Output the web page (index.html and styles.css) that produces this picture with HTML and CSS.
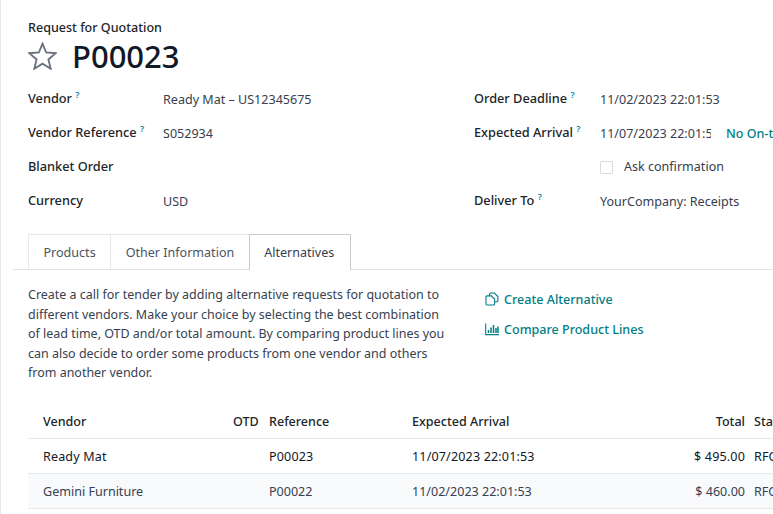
FILE: index.html
```html
<!DOCTYPE html>
<html lang="en">

<head>
    <meta charset="UTF-8">
    <meta name="viewport" content="width=device-width, initial-scale=1.0">
    <title>Request for Quotation P00023</title>
    <link rel="stylesheet" href="styles.css">
</head>

<body>
    <div class="sheet">
        <div class="title-block">
            <div class="doc-type">Request for Quotation</div>
            <div class="doc-name">
                <svg class="star" viewBox="0 0 28 27" width="29" height="28">
                    <path d="M14 1.5 L17.5 10.1 L26.8 10.8 L19.7 16.8 L21.9 25.8 L14 20.9 L6.1 25.8 L8.3 16.8 L1.2 10.8 L10.5 10.1 Z" />
                </svg>
                <h1>P00023</h1>
            </div>
        </div>

        <div class="form-columns">
            <div class="form-col">
                <div class="field">
                    <div class="label">Vendor <sup>?</sup></div>
                    <div class="value">Ready Mat – US12345675</div>
                </div>
                <div class="field">
                    <div class="label">Vendor Reference <sup>?</sup></div>
                    <div class="value">S052934</div>
                </div>
                <div class="field">
                    <div class="label">Blanket Order</div>
                    <div class="value"></div>
                </div>
                <div class="field">
                    <div class="label">Currency</div>
                    <div class="value">USD</div>
                </div>
            </div>
            <div class="form-col right">
                <div class="field">
                    <div class="label">Order Deadline <sup>?</sup></div>
                    <div class="value">11/02/2023 22:01:53</div>
                </div>
                <div class="field">
                    <div class="label">Expected Arrival <sup>?</sup></div>
                    <div class="value arrival">
                        <span class="clipped">11/07/2023 22:01:53</span>
                        <span class="on-time">No On-time Delivery Data</span>
                    </div>
                </div>
                <div class="field">
                    <div class="label"></div>
                    <div class="value confirm"><span class="checkbox"></span>Ask confirmation</div>
                </div>
                <div class="field">
                    <div class="label">Deliver To <sup>?</sup></div>
                    <div class="value">YourCompany: Receipts</div>
                </div>
            </div>
        </div>

        <div class="tabs">
            <div class="tab">Products</div>
            <div class="tab">Other Information</div>
            <div class="tab active">Alternatives</div>
        </div>

        <div class="tab-body">
            <p class="help">Create a call for tender by adding alternative requests for quotation to different vendors. Make your choice by selecting the best combination of lead time, OTD and/or total amount. By comparing product lines you can also decide to order some products from one vendor and others from another vendor.</p>
            <div class="actions">
                <a class="action">
                    <svg viewBox="0 0 14 14" width="14" height="14">
                        <path d="M4.6 3.8 V2 a1 1 0 0 1 1-1 H9.2 L12.9 4.6 V8.8 a1 1 0 0 1-1 1 H9.8" />
                        <path d="M2 3.9 H6.4 L9.6 7 V12 a1 1 0 0 1-1 1 H2 a1 1 0 0 1-1-1 V4.9 a1 1 0 0 1 1-1 Z" />
                    </svg>
                    Create Alternative
                </a>
                <a class="action">
                    <svg viewBox="0 0 14 14" width="14" height="14">
                        <path d="M0.7 1.5 V12.6 H14" />
                        <path class="bars" d="M3.5 8 V11 M6 5.5 V11 M8.5 3 V11 M11 6 V11 M13 4.5 V11" />
                    </svg>
                    Compare Product Lines
                </a>
            </div>
        </div>

        <table class="orders">
            <colgroup>
                <col class="c-vendor">
                <col class="c-otd">
                <col class="c-ref">
                <col class="c-arrival">
                <col class="c-total">
                <col class="c-status">
            </colgroup>
            <thead>
                <tr>
                    <th>Vendor</th>
                    <th class="num otd">OTD</th>
                    <th>Reference</th>
                    <th>Expected Arrival</th>
                    <th class="num">Total</th>
                    <th>Status</th>
                </tr>
            </thead>
            <tbody>
                <tr class="current">
                    <td>Ready Mat</td>
                    <td class="num"></td>
                    <td>P00023</td>
                    <td>11/07/2023 22:01:53</td>
                    <td class="num">$ 495.00</td>
                    <td>RFQ</td>
                </tr>
                <tr class="odd">
                    <td>Gemini Furniture</td>
                    <td class="num"></td>
                    <td>P00022</td>
                    <td>11/02/2023 22:01:53</td>
                    <td class="num">$ 460.00</td>
                    <td>RFQ</td>
                </tr>
            </tbody>
        </table>
    </div>
</body>

</html>
```

FILE: styles.css
```css
/* General Reset */
html,
body {
    margin: 0;
    height: 100%;
    overflow: hidden;
}

body {
    font-family: "Noto Sans", "Open Sans", sans-serif;
    font-size: 12.55px;
    color: #374151;
    background-color: #e7e9ed;
}

.sheet {
    margin-left: 1px;
    width: 772px;
    height: 514px;
    overflow: hidden;
    background-color: #ffffff;
}

/* Title */
.title-block {
    padding: 19px 0 0 27px;
}

.doc-type {
    font-weight: 500;
    line-height: 17px;
    color: #212529;
}

.doc-name {
    display: flex;
    align-items: center;
    gap: 15px;
    height: 36px;
    margin-top: 2px;
}

.star {
    flex: none;
    fill: none;
    stroke: #6b7280;
    stroke-width: 1.8;
}

h1 {
    margin: 0;
    font-size: 31px;
    font-weight: 500;
    line-height: 36px;
    color: #111827;
}

/* Form */
.form-columns {
    display: flex;
    margin-top: 14px;
    padding-left: 27px;
}

.form-col {
    flex: none;
    width: 446px;
}

.form-col.right {
    width: 299px;
    overflow: hidden;
}

.field {
    display: flex;
    height: 34px;
}

.label {
    flex: none;
    width: 135px;
    padding-top: 2px;
    font-size: 12.75px;
    font-weight: 500;
    line-height: 17px;
    color: #212529;
    white-space: nowrap;
}

.right .label {
    width: 126px;
}

.value {
    padding-top: 3px;
    line-height: 17px;
    white-space: nowrap;
}

sup {
    font-size: 9px;
    font-weight: 600;
    line-height: 0;
    color: #0180a5;
}

.arrival {
    display: flex;
}

.clipped {
    display: block;
    flex: none;
    width: 111px;
    overflow: hidden;
}

.on-time {
    margin-left: 15px;
    font-weight: 500;
    color: #017e84;
}

.value.confirm {
    display: flex;
    align-items: flex-start;
    padding-top: 2px;
}

.checkbox {
    flex: none;
    width: 11px;
    height: 11px;
    margin: 3px 11px 0 0;
    border: 1px solid #d8dadd;
    border-radius: 1px;
}

/* Tabs */
.tabs {
    display: flex;
    height: 35px;
    margin: 10px 0 0 12px;
    padding-left: 15px;
    border-bottom: 1px solid #dee2e6;
}

.tab {
    height: 35px;
    margin-right: -1px;
    padding: 0 14.5px;
    box-sizing: border-box;
    line-height: 35px;
    color: #4b5563;
    border: 1px solid #e5e7eb;
    border-bottom: none;
}

.tab.active {
    height: 36px;
    padding: 0 15.5px 0 14.5px;
    color: #374151;
    background-color: #ffffff;
    border-color: #c9ccd2;
}

/* Tab content */
.tab-body {
    display: flex;
    padding: 15px 0 0 27px;
}

.help {
    flex: none;
    width: 420px;
    margin: 0;
    font-size: 12.47px;
    line-height: 19.5px;
}

.actions {
    margin-top: -1px;
    margin-left: 37px;
}

.action {
    display: flex;
    align-items: center;
    gap: 5px;
    height: 30px;
    font-weight: 500;
    color: #017e84;
    white-space: nowrap;
}

.action svg {
    flex: none;
    fill: none;
    stroke: #017e84;
    stroke-width: 1.1;
}

.action svg .bars {
    stroke-width: 1.5;
}

/* Table */
.orders {
    width: 860px;
    margin: 21px 0 0 27px;
    border-collapse: collapse;
    table-layout: fixed;
}

.c-vendor {
    width: 205px;
}

.c-otd {
    width: 31px;
}

.c-ref {
    width: 143px;
}

.c-arrival {
    width: 200px;
}

.c-total {
    width: 142px;
}

.c-status {
    width: 139px;
}

th,
td {
    height: 35px;
    padding: 0 4px 0 5px;
    box-sizing: border-box;
    text-align: left;
    white-space: nowrap;
    border-bottom: 1px solid #e7e9ed;
}

th {
    padding-top: 2px;
    font-weight: 500;
    color: #212529;
}

th:first-child,
td:first-child {
    padding-left: 15px;
}

.num {
    text-align: right;
}

th.otd {
    padding-right: 8px;
    padding-left: 0;
}

.current td {
    letter-spacing: 0.15px;
    color: #111827;
}

.odd td {
    background-color: #f9fafb;
}
```
